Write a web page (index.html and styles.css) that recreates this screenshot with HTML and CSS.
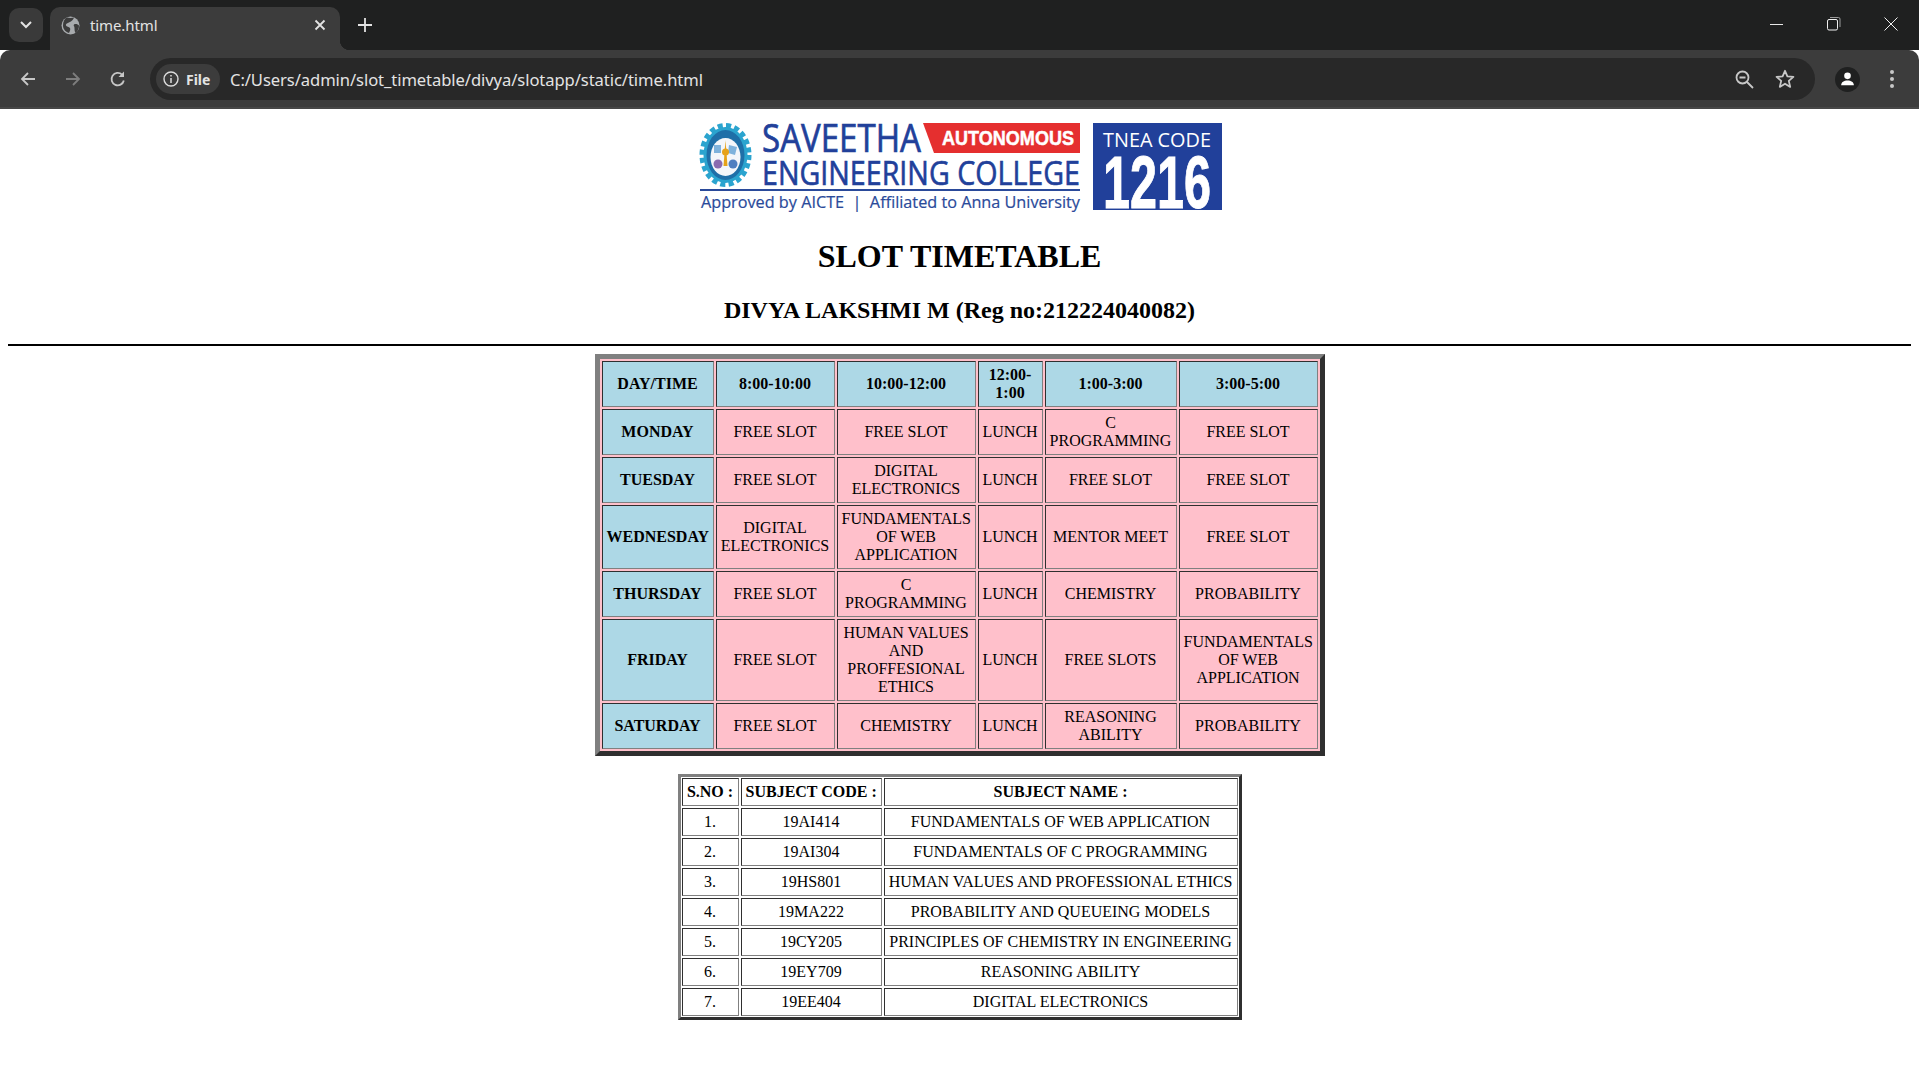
FILE: index.html
```html
<!DOCTYPE html>
<html lang="en">
<head>
<meta charset="utf-8">
<title>time.html</title>
<link rel="stylesheet" href="styles.css">
</head>
<body>
<header class="browser">
  <div class="tabstrip">
    <button class="tab-search"><svg width="14" height="10" viewBox="0 0 14 10"><path d="M2 2l5 5 5-5" fill="none" stroke="#e3e3e3" stroke-width="2"/></svg></button>
    <div class="tab">
      <svg class="globe" width="19" height="19" viewBox="0 0 19 19"><circle cx="9.5" cy="9.5" r="9" fill="#a8abae"/><path d="M6 1.500c2 .5 5 .5 7 0-.5 2-2.500 3.500-4 4.500-2 1-4.500 1.500-4 3.500.5 1.500 3 1 4 2.500.6 1.200 0 3-1 5-3-1-6-3.500-6-7.500S3.500 2.500 6 1.500z" fill="#3c3c3c"/><path d="M13 8.500c2-1 4 0 5 1 0 3-1 5.500-3.500 7.500-1-2-1-3-1-5s-1.500-2.500-.5-3.500z" fill="#3c3c3c"/></svg>
      <span class="tab-title">time.html</span>
      <svg class="tab-close" width="12" height="12" viewBox="0 0 12 12"><path d="M1.500 1.500l9 9m0-9l-9 9" stroke="#e3e3e3" stroke-width="1.800"/></svg>
    </div>
    <svg class="new-tab" width="14" height="14" viewBox="0 0 14 14"><path d="M7 0v14M0 7h14" stroke="#e3e3e3" stroke-width="1.800"/></svg>
    <div class="window-controls">
      <svg width="14" height="14" viewBox="0 0 14 14"><path d="M0 7.500h13" stroke="#e8e8e8" stroke-width="1"/></svg>
      <svg width="14" height="14" viewBox="0 0 14 14"><rect x=".5" y="2.500" width="10" height="10.500" rx="1.500" fill="none" stroke="#f0f0f0"/><path d="M3 .5h8.500a1.500 1.500 0 0 1 1.500 1.500v8" fill="none" stroke="#9a9a9a"/></svg>
      <svg width="14" height="14" viewBox="0 0 14 14"><path d="M.5.5l13 13m0-13l-13 13" stroke="#f0f0f0" stroke-width="1"/></svg>
    </div>
  </div>
  <div class="toolbar">
    <svg class="nav" width="18" height="18" viewBox="0 0 18 18"><path d="M16 9H3M9 3L3 9l6 6" fill="none" stroke="#c7c7c7" stroke-width="1.800"/></svg>
    <svg class="nav" width="18" height="18" viewBox="0 0 18 18"><path d="M2 9h13M9 3l6 6-6 6" fill="none" stroke="#7d7d7d" stroke-width="1.800"/></svg>
    <svg class="nav" width="18" height="18" viewBox="0 0 18 18"><path d="M14.800 10.500A6.200 6.200 0 1 1 13 4.600" fill="none" stroke="#c7c7c7" stroke-width="1.800"/><path d="M15 1.500v5.500H9.500z" fill="#c7c7c7"/></svg>
    <div class="omnibox">
      <div class="chip">
        <svg width="16" height="16" viewBox="0 0 16 16"><circle cx="8" cy="8" r="7" fill="none" stroke="#dcdcdc" stroke-width="1.400"/><path d="M8 7v5M8 4v1.600" stroke="#dcdcdc" stroke-width="1.500"/></svg>
        <span class="chip-label">File</span>
      </div>
      <span class="url">C:/Users/admin/slot_timetable/divya/slotapp/static/time.html</span>
      <svg class="omni-icon" width="19" height="19" viewBox="0 0 19 19"><circle cx="7.500" cy="7.500" r="6" fill="none" stroke="#c7c7c7" stroke-width="1.800"/><path d="M4.500 7.500h6M12 12l6 6" stroke="#c7c7c7" stroke-width="1.800"/></svg>
      <svg class="omni-icon" width="20" height="20" viewBox="0 0 20 20"><path d="M10 1.800l2.400 5.600 6 .5-4.600 4 1.400 6L10 14.700l-5.200 3.200 1.400-6-4.600-4 6-.5z" fill="none" stroke="#c7c7c7" stroke-width="1.800" stroke-linejoin="round"/></svg>
    </div>
    <div class="avatar"><svg width="19" height="17" viewBox="0 0 19 17"><circle cx="9.500" cy="4.500" r="4.200" fill="#fff"/><path d="M1.500 16.500c0-4 3.500-6 8-6s8 2 8 6z" fill="#fff"/></svg></div>
    <svg class="menu" width="6" height="20" viewBox="0 0 6 20"><circle cx="3" cy="3" r="2" fill="#c7c7c7"/><circle cx="3" cy="10" r="2" fill="#c7c7c7"/><circle cx="3" cy="17" r="2" fill="#c7c7c7"/></svg>
  </div>
</header>

<main class="page">
  <div class="logo-row">
    <svg class="logo" width="524" height="90" viewBox="0 0 524 90">
      <ellipse cx="27.500" cy="33" rx="23" ry="29" fill="none" stroke="#2ba4cf" stroke-width="6" stroke-dasharray="5 3.200"/>
      <ellipse cx="27.500" cy="33" rx="22" ry="28" fill="#2ba4cf"/>
      <ellipse cx="27.500" cy="33" rx="19" ry="25" fill="#1f6fa8"/>
      <ellipse cx="27.500" cy="35" rx="15" ry="19" fill="#f4f6fa"/>
      <path d="M16 23h7v8h-7zM31 23l8 2-2 8-7-2z" fill="#7fb2dc"/>
      <circle cx="20" cy="42" r="4.500" fill="#8a6bb0"/>
      <circle cx="35" cy="42" r="4.500" fill="#4f7fc0"/>
      <path d="M27.500 18l2 26h-4z" fill="#e6a21a"/>
      <circle cx="27.500" cy="30" r="3.500" fill="#e6a21a"/>
      <path d="M225 1h157v30H236z" fill="#e52f2f"/>
      <text class="logo-big" x="64" y="30" textLength="159" lengthAdjust="spacingAndGlyphs">SAVEETHA</text>
      <text class="logo-auto" x="244" y="23" textLength="132" lengthAdjust="spacingAndGlyphs">AUTONOMOUS</text>
      <text class="logo-mid" x="64" y="63" textLength="318" lengthAdjust="spacingAndGlyphs">ENGINEERING COLLEGE</text>
      <rect x="2" y="67" width="380" height="2" fill="#2a4a9a"/>
      <text class="logo-sub" x="3" y="86" textLength="379" lengthAdjust="spacingAndGlyphs">Approved by AICTE  |  Affiliated to Anna University</text>
      <rect x="395" y="1" width="129" height="87" fill="#21409a"/>
      <text class="logo-tnea" x="405" y="25" textLength="108" lengthAdjust="spacingAndGlyphs">TNEA CODE</text>
      <text class="logo-code" x="405" y="86" textLength="108" lengthAdjust="spacingAndGlyphs">1216</text>
    </svg>
  </div>
  <h1>SLOT TIMETABLE</h1>
  <h2>DIVYA LAKSHMI M (Reg no:212224040082)</h2>
  <hr>
  <table class="timetable">
    <colgroup><col class="c-day"><col class="c-morning"><col class="c-late"><col class="c-lunch"><col class="c-after"><col class="c-eve"></colgroup>
    <tr><th>DAY/TIME</th><th>8:00-10:00</th><th>10:00-12:00</th><th>12:00-1:00</th><th>1:00-3:00</th><th>3:00-5:00</th></tr>
    <tr><th>MONDAY</th><td>FREE SLOT</td><td>FREE SLOT</td><td>LUNCH</td><td>C PROGRAMMING</td><td>FREE SLOT</td></tr>
    <tr><th>TUESDAY</th><td>FREE SLOT</td><td>DIGITAL ELECTRONICS</td><td>LUNCH</td><td>FREE SLOT</td><td>FREE SLOT</td></tr>
    <tr><th>WEDNESDAY</th><td>DIGITAL ELECTRONICS</td><td>FUNDAMENTALS OF WEB APPLICATION</td><td>LUNCH</td><td>MENTOR MEET</td><td>FREE SLOT</td></tr>
    <tr><th>THURSDAY</th><td>FREE SLOT</td><td>C PROGRAMMING</td><td>LUNCH</td><td>CHEMISTRY</td><td>PROBABILITY</td></tr>
    <tr><th>FRIDAY</th><td>FREE SLOT</td><td>HUMAN VALUES AND PROFFESIONAL ETHICS</td><td>LUNCH</td><td>FREE SLOTS</td><td>FUNDAMENTALS OF WEB APPLICATION</td></tr>
    <tr><th>SATURDAY</th><td>FREE SLOT</td><td>CHEMISTRY</td><td>LUNCH</td><td>REASONING ABILITY</td><td>PROBABILITY</td></tr>
  </table>
  <br>
  <div class="subject-frame">
    <table class="subjects">
      <colgroup><col class="c-sno"><col class="c-code"><col class="c-name"></colgroup>
      <tr><th>S.NO :</th><th>SUBJECT CODE :</th><th>SUBJECT NAME :</th></tr>
      <tr><td>1.</td><td>19AI414</td><td>FUNDAMENTALS OF WEB APPLICATION</td></tr>
      <tr><td>2.</td><td>19AI304</td><td>FUNDAMENTALS OF C PROGRAMMING</td></tr>
      <tr><td>3.</td><td>19HS801</td><td>HUMAN VALUES AND PROFESSIONAL ETHICS</td></tr>
      <tr><td>4.</td><td>19MA222</td><td>PROBABILITY AND QUEUEING MODELS</td></tr>
      <tr><td>5.</td><td>19CY205</td><td>PRINCIPLES OF CHEMISTRY IN ENGINEERING</td></tr>
      <tr><td>6.</td><td>19EY709</td><td>REASONING ABILITY</td></tr>
      <tr><td>7.</td><td>19EE404</td><td>DIGITAL ELECTRONICS</td></tr>
    </table>
  </div>
</main>
</body>
</html>
```
FILE: styles.css
```css
* { box-sizing: border-box; }
html, body { margin: 0; height: 100%; overflow: hidden; background: #fff; }
body { font-family: "Liberation Serif", "Times New Roman", serif; font-size: 16px; color: #000; }

.browser { font-family: "Noto Sans", "Open Sans", sans-serif; color: #e3e3e3; }
.tabstrip { height: 50px; background: #1f2020; display: flex; align-items: flex-start; position: relative; }
.tab-search { width: 34px; height: 34px; margin: 8px 0 0 9px; padding: 0; border: 0; border-radius: 10px; background: #3a3a3a; display: flex; align-items: center; justify-content: center; }
.tab { width: 290px; height: 43px; margin: 7px 0 0 7px; padding: 0 14px 7px 11px; background: #3c3c3c; border-radius: 10px 10px 0 0; display: flex; align-items: center; position: relative; }
.tab::after { content: ""; position: absolute; right: -10px; bottom: 0; width: 10px; height: 10px; background: radial-gradient(circle at 100% 0, transparent 10px, #3c3c3c 10.5px); }
.tab .globe { margin-right: 10px; }
.tab-title { flex: 1; font-size: 15px; letter-spacing: -.1px; color: #e3e3e3; }
.new-tab { margin: 18px 0 0 18px; }
.window-controls { margin-left: auto; height: 50px; display: flex; align-items: center; gap: 43px; padding: 0 21px 2px 0; }

.toolbar { height: 59px; background: #3c3c3c; border-radius: 10px 10px 0 0; border-bottom: 2px solid #474747; display: flex; align-items: center; padding: 1px 18px 0 19px; }
.nav { margin-right: 27px; flex: none; }
.nav:nth-child(3) { margin-right: 23px; }
.omnibox { width: 1665px; height: 42px; margin-right: 18px; flex: none; background: #282828; border-radius: 21px; display: flex; align-items: center; padding: 0 20px 0 6px; }
.chip { width: 64px; height: 30px; background: #3c3c3c; border-radius: 15px; display: flex; align-items: center; gap: 7px; padding-left: 7px; }
.chip-label { font-size: 14px; font-weight: 700; color: #e3e3e3; }
.url { flex: 1; margin-left: 10px; font-size: 16.6px; letter-spacing: -.08px; color: #e3e3e3; }
.omni-icon { margin-left: 21px; flex: none; }
.avatar { width: 25px; height: 25px; margin-left: 2px; border-radius: 50%; background: #1f2020; display: flex; align-items: center; justify-content: center; flex: none; }
.avatar svg { width: 15px; height: 14px; }
.menu { margin-left: 29px; flex: none; }

.page { padding: 8px; }
.logo-row { height: 100px; display: flex; justify-content: center; padding: 5px 0 0 0; }
.logo { display: block; flex: none; }
.logo-big { font-family: "Open Sans", sans-serif; font-size: 39px; fill: #21409a; stroke: #21409a; stroke-width: .7px; }
.logo-mid { font-family: "Open Sans", sans-serif; font-size: 32px; fill: #21409a; stroke: #21409a; stroke-width: .6px; }
.logo-auto { font-family: "Liberation Sans", sans-serif; font-size: 21px; font-weight: 700; fill: #fff; stroke: #fff; stroke-width: .5px; }
.logo-sub { font-family: "Open Sans", sans-serif; font-size: 16px; fill: #2a4a9a; stroke: #2a4a9a; stroke-width: .2px; white-space: pre; }
.logo-tnea { font-family: "Open Sans", sans-serif; font-size: 20px; fill: #fff; }
.logo-code { font-family: "Liberation Sans", sans-serif; font-size: 74px; font-weight: 700; fill: #fff; stroke: #fff; stroke-width: 1px; }

h1, h2 { text-align: center; font-weight: 700; }
h1 { font-size: 32px; margin: 21.44px 0; }
h2 { font-size: 24px; margin: 19.92px 0; }
hr { height: 2px; margin: 8px 0; border: 0; background: #000; }

table { border-collapse: separate; border-spacing: 2px; table-layout: fixed; }
th, td { padding: 4px; border: 1px solid; border-color: #2f2f2f #808080 #808080 #2f2f2f; text-align: center; vertical-align: middle; font-size: 16px; }

.timetable { width: 730px; margin: 0 auto; border: 5px solid; border-color: #808080 #2f2f2f #2f2f2f #808080; background: #ffc0cb; }
.timetable th { background: #add8e6; }
.timetable td { background: #ffc0cb; }
.c-day { width: 112px; }
.c-morning { width: 119px; }
.c-late { width: 139px; }
.c-lunch { width: 65px; }
.c-after { width: 132px; }
.c-eve { width: 139px; }

.subject-frame { width: 564px; margin: 0 auto; border: 3px solid; border-color: #808080 #2f2f2f #2f2f2f #808080; }
.subjects { width: 560px; margin: -1px; }
.subjects th { white-space: nowrap; }
.c-sno { width: 57px; }
.c-code { width: 141px; }
.c-name { width: 354px; }
```
